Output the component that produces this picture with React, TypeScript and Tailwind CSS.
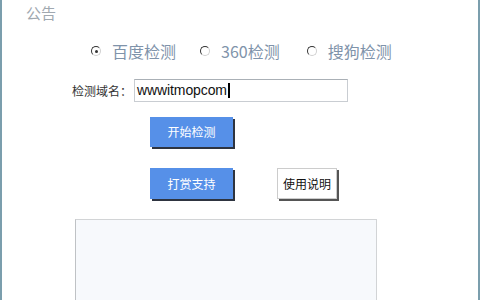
const cjk = "font-['Microsoft_YaHei','Noto_Sans_CJK_SC',sans-serif]";

function Radio({ checked }: { checked?: boolean }) {
  return (
    <span className="relative inline-flex h-[10px] w-[10px] items-center justify-center rounded-full border-[1.5px] border-l-[#333] border-t-[#333] border-r-[#d0d0d0] border-b-[#d0d0d0] bg-white">
      {checked && <span className="h-[3px] w-[3px] rounded-full bg-[#333]" />}
    </span>
  );
}

function Option({ label, checked }: { label: string; checked?: boolean }) {
  return (
    <label className="flex items-center gap-[11px]">
      <Radio checked={checked} />
      <span className="text-[16px] leading-none text-[#7f93aa]">{label}</span>
    </label>
  );
}

export default function App() {
  return (
    <div className={`${cjk} h-[300px] w-[480px] overflow-hidden border-x-2 border-[#7b9ead] bg-white`}>
      <div className="pl-[24px] pt-[4px] text-[15px] leading-[17px] text-[#a0a8b0]">公告</div>

      <div className="mt-[22px] flex items-center pl-[89px]">
        <Option label="百度检测" checked />
        <div className="w-[24px]" />
        <Option label="360检测" />
        <div className="w-[27px]" />
        <Option label="搜狗检测" />
      </div>

      <div className="mt-[20px] flex items-center">
        <span className="w-[131px] pr-[1px] text-right text-[12px] text-[#333]">检测域名：</span>
        <div className="ml-[1px] flex h-[23px] w-[214px] items-center border border-[#c9cdd2] border-t-[#aab0b6] bg-white pl-[2px]">
          <span className="font-['Liberation_Sans',sans-serif] text-[14px] font-medium tracking-[-0.1px] text-[#111]">wwwitmopcom</span>
          <span className="ml-[1px] h-[15px] w-[2px] bg-black" />
        </div>
      </div>

      <div className="mt-[15px] pl-[148px]">
        <button className="h-[30px] w-[83px] bg-[#5690e8] text-[12px] text-white shadow-[2px_2px_0_#2e3440]">开始检测</button>
      </div>

      <div className="mt-[21px] flex items-center pl-[148px]">
        <button className="h-[31px] w-[83px] bg-[#5690e8] text-[12px] text-white shadow-[2px_2px_0_#2e3440]">打赏支持</button>
        <button className="ml-[44px] h-[31px] w-[60px] border border-[#ccc] bg-white text-[12px] text-[#111] shadow-[2px_2px_0_#555]">使用说明</button>
      </div>

      <div className="ml-[73px] mt-[20px] h-[90px] w-[302px] border-[1.5px] border-[#d2d4d6] border-l-[#bfc2c5] bg-[#f7f9fc]" />
    </div>
  );
}
